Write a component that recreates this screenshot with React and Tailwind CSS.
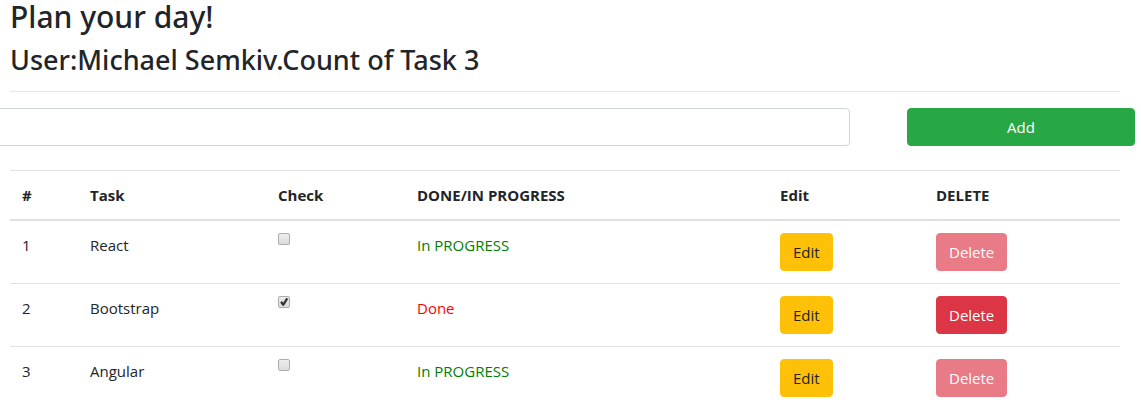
const tasks = [
  { id: 1, name: 'React', done: false },
  { id: 2, name: 'Bootstrap', done: true },
  { id: 3, name: 'Angular', done: false },
];

function Checkbox({ label, checked }) {
  return (
    <span className="grid size-3 *:col-start-1 *:row-start-1">
      <input
        type="checkbox"
        aria-label={label}
        defaultChecked={checked}
        className="peer size-3 appearance-none rounded-xs border border-[#adadad] bg-linear-to-b from-[#ededed] to-[#dcdcdc]"
      />
      <svg viewBox="0 0 12 12" className="pointer-events-none invisible size-3 peer-checked:visible" aria-hidden="true">
        <path d="M2.2 6.4 L4 5 L5.3 6.8 L8.2 1.8 L10.2 2.9 L6 9.8 L4.5 9.8 Z" fill="#333" />
      </svg>
    </span>
  );
}

function TaskRow({ task }) {
  return (
    <tr className="border-t border-[#dee2e6] align-top">
      <td className="p-3">{task.id}</td>
      <td className="p-3">{task.name}</td>
      <td className="p-3">
        <Checkbox label={`Check ${task.name}`} checked={task.done} />
      </td>
      <td className={task.done ? 'p-3 text-[#ff0000]' : 'p-3 text-[#008000]'}>
        {task.done ? 'Done' : 'In PROGRESS'}
      </td>
      <td className="p-3">
        <button type="button" className="block rounded-sm border border-[#ffc107] bg-[#ffc107] px-3 py-1.5">
          Edit
        </button>
      </td>
      <td className="p-3">
        <button
          type="button"
          disabled={!task.done}
          className="block rounded-sm border border-[#dc3545] bg-[#dc3545] px-3 py-1.5 text-white disabled:opacity-65"
        >
          Delete
        </button>
      </td>
    </tr>
  );
}

export default function App() {
  return (
    <main className="overflow-x-hidden bg-white pr-[21px] pl-2.5 font-['Open_Sans',sans-serif] text-[15px] leading-6 text-[#212529]">
      <h1 className="mb-2.5 font-['Noto_Sans',sans-serif] text-[30px] leading-[34px] font-medium">Plan your day!</h1>
      <h2 className="font-['Noto_Sans',sans-serif] text-[27px] leading-[31px] font-medium">
        User:Michael Semkiv.Count of Task 3
      </h2>
      <hr className="my-4 border-[#e5e5e5]" />
      <form className="-mx-[15px] mb-6 flex justify-between" onSubmit={(e) => e.preventDefault()}>
        <input
          type="text"
          aria-label="New task"
          className="h-[38px] w-3/4 rounded-sm border border-[#ced4da] bg-white px-3 py-1.5"
        />
        <button type="submit" className="w-1/5 rounded-sm border border-[#28a745] bg-[#28a745] px-3 py-1.5 text-white">
          Add
        </button>
      </form>
      <table className="w-full table-fixed border-collapse text-left">
        <colgroup>
          <col className="w-[68px]" />
          <col className="w-[188px]" />
          <col className="w-[139px]" />
          <col className="w-[363px]" />
          <col className="w-[156px]" />
          <col className="w-[196px]" />
        </colgroup>
        <thead>
          <tr className="border-t border-b-2 border-t-[#dee2e6] border-b-[#dee2e6]">
            <th className="p-3">#</th>
            <th className="p-3">Task</th>
            <th className="p-3">Check</th>
            <th className="p-3">DONE/IN PROGRESS</th>
            <th className="p-3">Edit</th>
            <th className="p-3">DELETE</th>
          </tr>
        </thead>
        <tbody>
          {tasks.map((task) => (
            <TaskRow key={task.id} task={task} />
          ))}
        </tbody>
      </table>
    </main>
  );
}
